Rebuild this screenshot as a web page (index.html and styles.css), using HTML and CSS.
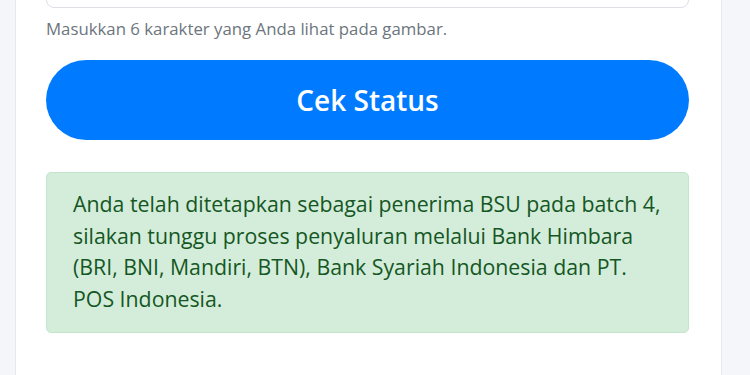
FILE: index.html
```html
<!DOCTYPE html>
<html lang="id">
<head>
  <meta charset="UTF-8">
  <meta name="viewport" content="width=device-width, initial-scale=1.0">
  <title>Cek Status BSU</title>
  <link rel="stylesheet" href="styles.css">
</head>
<body>
  <div class="card">
    <div class="field">
      <input type="text" id="captcha" class="input">
      <small class="help">Masukkan 6 karakter yang Anda lihat pada gambar.</small>
    </div>
    <button class="btn">Cek Status</button>
    <div class="alert">
      Anda telah ditetapkan sebagai penerima BSU pada batch 4, silakan tunggu proses penyaluran melalui Bank Himbara (BRI, BNI, Mandiri, BTN), Bank Syariah Indonesia dan PT. POS Indonesia.
    </div>
  </div>
</body>
</html>
```

FILE: styles.css
```css
html, body {
  margin: 0;
  height: 100%;
}
body {
  font-family: "Open Sans", sans-serif;
  background: #f5f6fa;
  overflow: hidden;
}
.card {
  width: 643px;
  margin-left: 15px;
  margin-top: -40px;
  padding: 0 32px 40px 30px;
  background: #ffffff;
  border-left: 1px solid #e6e8ee;
  border-right: 1px solid #e6e8ee;
  min-height: 420px;
}
.field {
  margin-bottom: 20px;
}
.input {
  display: block;
  box-sizing: border-box;
  width: 100%;
  height: 48px;
  border: 1px solid #dcdfe4;
  border-radius: 8px;
  background: #fff;
}
.help {
  display: block;
  margin-top: 9px;
  font-size: 16.8px;
  color: #6c757d;
}
.btn {
  display: block;
  width: 100%;
  height: 80px;
  border: none;
  border-radius: 40px;
  background: #007bff;
  color: #ffffff;
  font-family: "Open Sans", sans-serif;
  font-size: 28px;
  font-weight: 600;
  cursor: pointer;
}
.alert {
  margin-top: 32px;
  padding: 15px 26px 18px 26px;
  background: #d4edda;
  border: 1px solid #c3e6cb;
  border-radius: 5px;
  color: #155724;
  font-size: 21.3px;
  line-height: 31.5px;
}
```
